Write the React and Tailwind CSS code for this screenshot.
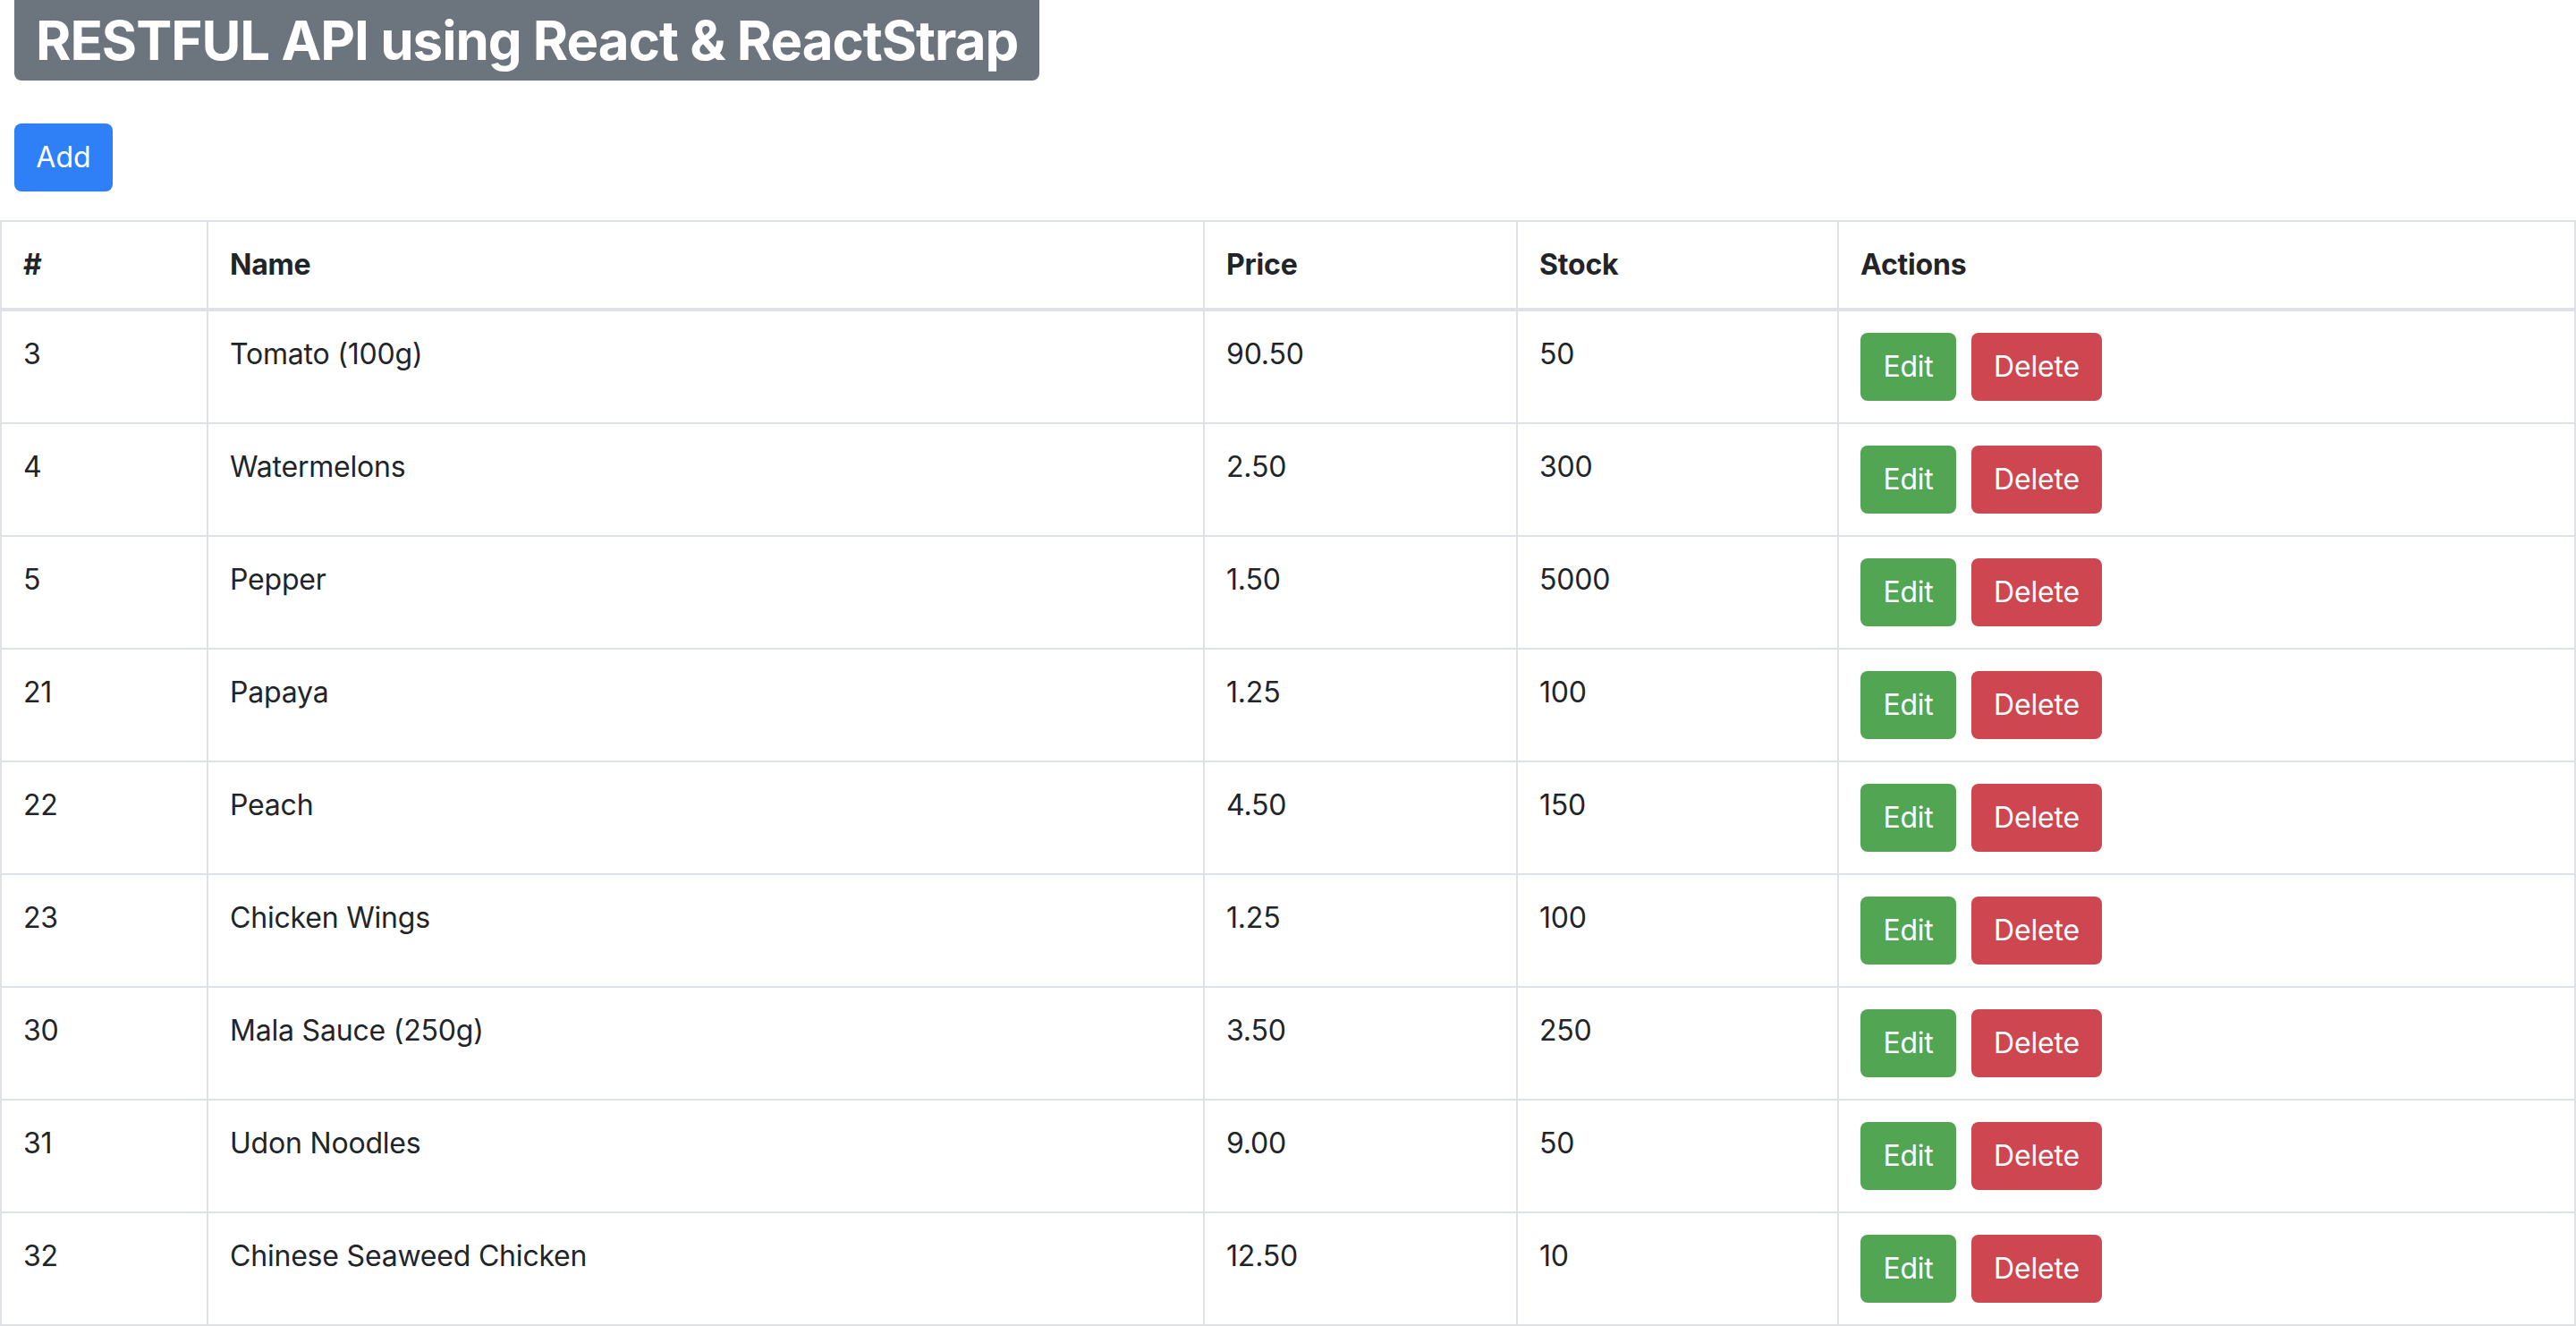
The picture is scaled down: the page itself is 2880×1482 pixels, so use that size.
import React from 'react';

const rows = [
  { id: 3, name: 'Tomato (100g)', price: '90.50', stock: 50 },
  { id: 4, name: 'Watermelons', price: '2.50', stock: 300 },
  { id: 5, name: 'Pepper', price: '1.50', stock: 5000 },
  { id: 21, name: 'Papaya', price: '1.25', stock: 100 },
  { id: 22, name: 'Peach', price: '4.50', stock: 150 },
  { id: 23, name: 'Chicken Wings', price: '1.25', stock: 100 },
  { id: 30, name: 'Mala Sauce (250g)', price: '3.50', stock: 250 },
  { id: 31, name: 'Udon Noodles', price: '9.00', stock: 50 },
  { id: 32, name: 'Chinese Seaweed Chicken', price: '12.50', stock: 10 },
];

const App = () => {
  return (
    <div className="bg-white min-h-screen text-[#212529] font-['Inter','Liberation_Sans',sans-serif]">
      <div className="pl-[16px]">
        <h1 className="inline-block bg-[#6c757d] text-white font-bold text-[60px] leading-[60px] px-[24px] py-[15px] rounded-b-[8px] tracking-[-1px]">
          RESTFUL API using React &amp; ReactStrap
        </h1>
        <div className="mt-[48px]">
          <button className="h-[76px] w-[110px] bg-[#2f80f7] text-white text-[32px] leading-[48px] rounded-[8px]">
            Add
          </button>
        </div>
      </div>

      <table className="mt-[32px] w-full table-fixed border-collapse text-[32px] leading-[48px] tracking-[-0.2px]">
        <thead>
          <tr>
            <th className="w-[231px] border-2 border-b-4 border-[#dee2e6] px-[24px] py-[24px] text-left font-bold">#</th>
            <th className="w-[1114px] border-2 border-b-4 border-[#dee2e6] px-[24px] py-[24px] text-left font-bold">Name</th>
            <th className="w-[350px] border-2 border-b-4 border-[#dee2e6] px-[24px] py-[24px] text-left font-bold">Price</th>
            <th className="w-[359px] border-2 border-b-4 border-[#dee2e6] px-[24px] py-[24px] text-left font-bold">Stock</th>
            <th className="border-2 border-b-4 border-[#dee2e6] px-[24px] py-[24px] text-left font-bold">Actions</th>
          </tr>
        </thead>
        <tbody>
          {rows.map((r) => (
            <tr key={r.id}>
              <td className="border-2 border-[#dee2e6] px-[24px] py-[24px] align-top">{r.id}</td>
              <td className="border-2 border-[#dee2e6] px-[24px] py-[24px] align-top">{r.name}</td>
              <td className="border-2 border-[#dee2e6] px-[24px] py-[24px] align-top">{r.price}</td>
              <td className="border-2 border-[#dee2e6] px-[24px] py-[24px] align-top">{r.stock}</td>
              <td className="border-2 border-[#dee2e6] px-[24px] py-[24px] align-top">
                <div className="flex gap-[17px] h-[76px]">
                  <button className="h-[76px] w-[107px] bg-[#52a552] text-white text-[32px] leading-[48px] rounded-[8px]">
                    Edit
                  </button>
                  <button className="h-[76px] w-[146px] bg-[#cd4650] text-white text-[32px] leading-[48px] rounded-[8px]">
                    Delete
                  </button>
                </div>
              </td>
            </tr>
          ))}
        </tbody>
      </table>
    </div>
  );
};

export default App;
